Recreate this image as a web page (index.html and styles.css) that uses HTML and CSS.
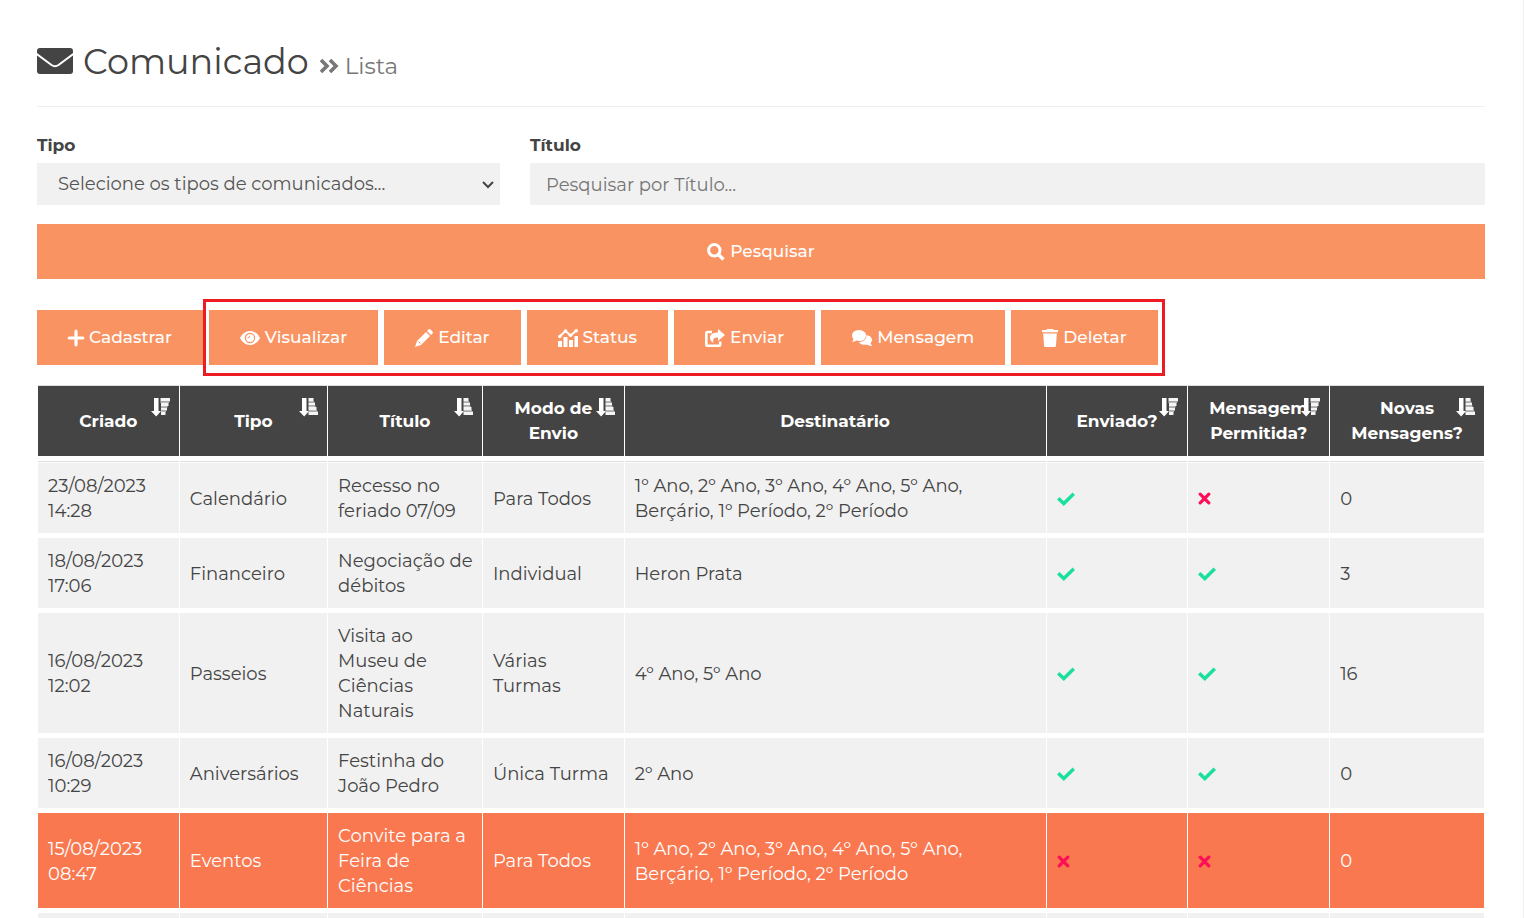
FILE: index.html
```html
<!DOCTYPE html>
<html lang="pt-BR">
<head>
<meta charset="utf-8">
<title>Comunicado - Lista</title>
<link rel="stylesheet" href="styles.css">
</head>
<body>
<svg class="sprite" aria-hidden="true">
  <symbol id="check" viewBox="0 0 18 14"><path d="M1.200 6.200L6.800 11.500L16.800 1.800" fill="none" stroke="currentColor" stroke-width="3.500"/></symbol>
  <symbol id="times" viewBox="0 0 14 14"><path d="M2.200 2.200L10.800 10.800M10.800 2.200L2.200 10.800" fill="none" stroke="currentColor" stroke-width="3.200" stroke-linecap="round"/></symbol>
  <symbol id="sort-asc" viewBox="0 0 20 20"><path d="M3 0h4.500v13H10L5.200 18.500L0 13h3z" fill="#fff"/><path d="M9.500 0h5v3h-5zM9.500 4.500h6.500v3h-6.500zM9.500 9h8v3h-8zM9.500 13.500h9.500v3.500h-9.500z" fill="#f4f4f4"/><path d="M9.500 3h5.500v1.500h-5.500zM9.500 7.500h7v1.500h-7zM9.500 12h8.500v1.500h-8.500z" fill="#bbb"/></symbol>
  <symbol id="sort-desc" viewBox="0 0 20 20"><path d="M3 0h4.500v13H10L5.200 18.500L0 13h3z" fill="#fff"/><path d="M9.500 0h9.500v3.500h-9.500zM10 5h7.500v3h-7.500zM10 9.500h6v3h-6zM10 14h4.500v3h-4.500z" fill="#f4f4f4"/><path d="M9.500 3.500h8.500v1.500h-8.500zM10 8h6.500v1.500h-6.500zM10 12.500h5v1.500h-5z" fill="#bbb"/></symbol>
</svg>
<main class="page">
  <h1 class="title">
    <svg class="title-icon" viewBox="0 0 36 26"><rect width="36" height="26" rx="3" fill="currentColor"/><path d="M-1 5.500L14.500 17Q18 19.400 21.500 17L37 5.500" fill="none" stroke="#fff" stroke-width="2"/></svg>
    <span>Comunicado</span>
    <small class="subtitle"><svg class="chevrons" viewBox="0 0 20 16"><path d="M2 2L8 8L2 14M11 2L17 8L11 14" fill="none" stroke="currentColor" stroke-width="3.600"/></svg>Lista</small>
  </h1>
  <form class="filters">
    <div class="field">
      <label for="tipo">Tipo</label>
      <div class="select-wrap">
        <select id="tipo" class="control select"><option>Selecione os tipos de comunicados...</option></select>
        <svg class="caret" viewBox="0 0 12 8"><path d="M1 1L6 6L11 1" fill="none" stroke="currentColor" stroke-width="2"/></svg>
      </div>
    </div>
    <div class="field">
      <label for="titulo">Título</label>
      <input id="titulo" class="control" type="text" placeholder="Pesquisar por Título...">
    </div>
    <button type="button" class="btn search"><svg class="icon i18" viewBox="0 0 18 18"><circle cx="7.300" cy="7.300" r="5.700" fill="none" stroke="currentColor" stroke-width="3"/><path d="M11.500 11.500L16.500 16.500" stroke="currentColor" stroke-width="3.400"/></svg>Pesquisar</button>
  </form>
  <div class="toolbar">
    <button type="button" class="btn"><svg class="icon i16" viewBox="0 0 16 16"><path d="M8 1.200V14.800M1.200 8H14.800" stroke="currentColor" stroke-width="3.200" stroke-linecap="round"/></svg>Cadastrar</button>
    <div class="highlight">
      <button type="button" class="btn"><svg class="icon i20" viewBox="0 0 20 16"><path d="M10 1C5.500 1 2 4 0 8c2 4 5.500 7 10 7s8-3 10-7c-2-4-5.500-7-10-7z" fill="currentColor"/><circle cx="10" cy="8" r="4.600" fill="none" stroke="#f99362" stroke-width="1.200"/><path d="M7.600 7.800Q9.800 7.800 9.900 5.600" fill="none" stroke="#f99362"/></svg>Visualizar</button>
      <button type="button" class="btn"><svg class="icon i18" viewBox="0 0 18 18"><path d="M11 3L15 7L6 16L0 18L2 12zM12 2L13.500.500q1-1 2 0l2 2q1 1 0 2L16 6z" fill="currentColor"/><path d="M3.500 12.500L5.500 14.500" stroke="#f99362"/></svg>Editar</button>
      <button type="button" class="btn"><svg class="icon i20" viewBox="0 0 20 18"><path d="M0 12h4v6H0zM5.500 8h4v10h-4zM11 11h4v7h-4zM16.500 7h3.500v11h-3.500z" fill="currentColor"/><path d="M1.500 7.500L7.500 2L12.500 6.500L18.500 1.500" fill="none" stroke="currentColor" stroke-width="2"/><g fill="currentColor"><circle cx="1.800" cy="7.500" r="1.800"/><circle cx="7.500" cy="2" r="1.800"/><circle cx="12.500" cy="6.300" r="1.800"/><circle cx="18.200" cy="1.800" r="1.800"/></g></svg>Status</button>
      <button type="button" class="btn"><svg class="icon i20" viewBox="0 0 20 18"><path d="M7 3H2.500Q1.300 3 1.300 4.200V15.500Q1.300 16.700 2.500 16.700H14Q15.200 16.700 15.200 15.500V12.500" fill="none" stroke="currentColor" stroke-width="2.600"/><path d="M13 0L20 6L13 12V8.500C9.500 8.500 7.500 9.500 8.500 14C2.500 10 4 3.500 13 3.500z" fill="currentColor"/></svg>Enviar</button>
      <button type="button" class="btn"><svg class="icon i20" viewBox="0 0 20 16"><path d="M14.500 5Q20 6 20 10Q20 12 18.500 13Q19 15 20.500 16Q17.500 16 15.500 14.700Q9 15.500 7 12Q14.500 11.500 14.500 5z" fill="currentColor"/><path d="M7 0Q14 .500 14 5.500Q13.500 11 7 11Q5.500 11 4.500 10.600Q2.500 12 0 12Q1.300 10.500 1.500 9Q0 7.500 0 5.500Q0 .500 7 0z" fill="currentColor"/></svg>Mensagem</button>
      <button type="button" class="btn"><svg class="icon i16" viewBox="0 0 16 18"><path d="M5 0h6l.800 1H16v2.300H0V1h4.200zM1.200 4.500h13.600L14 16.500Q13.900 18 12.500 18h-9Q2.100 18 2 16.500z" fill="currentColor"/></svg>Deletar</button>
    </div>
  </div>
  <table class="list">
    <colgroup><col class="w-s"><col class="w-m"><col class="w-l"><col class="w-s"><col class="w-xl"><col class="w-s"><col class="w-s"><col class="w-l"></colgroup>
    <thead>
      <tr>
        <th>Criado<svg class="sort"><use href="#sort-desc"/></svg></th>
        <th>Tipo<svg class="sort"><use href="#sort-asc"/></svg></th>
        <th>Título<svg class="sort"><use href="#sort-asc"/></svg></th>
        <th>Modo de<br>Envio<svg class="sort"><use href="#sort-asc"/></svg></th>
        <th>Destinatário</th>
        <th>Enviado?<svg class="sort"><use href="#sort-desc"/></svg></th>
        <th>Mensagem<br>Permitida?<svg class="sort"><use href="#sort-desc"/></svg></th>
        <th>Novas<br>Mensagens?<svg class="sort"><use href="#sort-asc"/></svg></th>
      </tr>
    </thead>
    <tbody>
      <tr><td>23/08/2023<br>14:28</td><td>Calendário</td><td>Recesso no<br>feriado 07/09</td><td>Para Todos</td><td>1º Ano, 2º Ano, 3º Ano, 4º Ano, 5º Ano,<br>Berçário, 1º Período, 2º Período</td><td><svg class="mark yes"><use href="#check"/></svg></td><td><svg class="mark no"><use href="#times"/></svg></td><td>0</td></tr>
      <tr><td>18/08/2023<br>17:06</td><td>Financeiro</td><td>Negociação de<br>débitos</td><td>Individual</td><td>Heron Prata</td><td><svg class="mark yes"><use href="#check"/></svg></td><td><svg class="mark yes"><use href="#check"/></svg></td><td>3</td></tr>
      <tr><td>16/08/2023<br>12:02</td><td>Passeios</td><td>Visita ao<br>Museu de<br>Ciências<br>Naturais</td><td>Várias<br>Turmas</td><td>4º Ano, 5º Ano</td><td><svg class="mark yes"><use href="#check"/></svg></td><td><svg class="mark yes"><use href="#check"/></svg></td><td>16</td></tr>
      <tr><td>16/08/2023<br>10:29</td><td>Aniversários</td><td>Festinha do<br>João Pedro</td><td>Única Turma</td><td>2º Ano</td><td><svg class="mark yes"><use href="#check"/></svg></td><td><svg class="mark yes"><use href="#check"/></svg></td><td>0</td></tr>
      <tr class="selected"><td>15/08/2023<br>08:47</td><td>Eventos</td><td>Convite para a<br>Feira de<br>Ciências</td><td>Para Todos</td><td>1º Ano, 2º Ano, 3º Ano, 4º Ano, 5º Ano,<br>Berçário, 1º Período, 2º Período</td><td><svg class="mark no"><use href="#times"/></svg></td><td><svg class="mark no"><use href="#times"/></svg></td><td>0</td></tr>
      <tr><td></td><td></td><td></td><td></td><td></td><td></td><td></td><td></td></tr>
    </tbody>
  </table>
</main>
</body>
</html>
```
FILE: styles.css
```css
* { box-sizing: border-box; }
body {
  margin: 0;
  height: 100vh;
  overflow: hidden;
  background: #fff;
  color: #444;
  font: 400 18px/25px Montserrat, Inter, sans-serif;
}
.sprite { display: none; }
.page {
  min-height: 100vh;
  padding: 38px 38px 0 37px;
  border-right: 1px solid #eee;
}
.title {
  display: flex;
  align-items: baseline;
  gap: 10px;
  margin: 0 0 26px;
  padding-bottom: 16px;
  border-bottom: 1px solid #eee;
  font-size: 35px;
  line-height: 48px;
  font-weight: 400;
}
.title-icon { width: 36px; height: 26px; }
.subtitle {
  display: flex;
  align-items: baseline;
  gap: 6px;
  color: #777;
  font-size: 23px;
}
.chevrons { width: 20px; height: 16px; }
.filters {
  display: grid;
  grid-template-columns: 463fr 955fr;
  gap: 19px 30px;
}
.field label { display: block; margin-bottom: 5px; font-size: 17px; font-weight: 700; }
.control {
  display: block;
  width: 100%;
  height: 42px;
  padding: 1px 16px 0;
  border: 0;
  border-radius: 0;
  background: #f1f1f1;
  color: #555;
  font: inherit;
}
.control::placeholder { color: #757575; opacity: 1; }
.select-wrap { position: relative; }
.select { appearance: none; padding: 1px 21px 0; }
.caret {
  position: absolute;
  top: 18px;
  right: 6px;
  width: 12px;
  height: 8px;
  pointer-events: none;
}
.btn {
  display: flex;
  align-items: center;
  justify-content: center;
  gap: 5px;
  height: 55px;
  padding: 0 31px;
  border: 0;
  background: #f99362;
  color: #fff;
  font: inherit;
  font-size: 17px;
  font-weight: 500;
  white-space: nowrap;
}
.search { grid-column: 1 / -1; }
.icon { height: 18px; flex: none; overflow: visible; }
.i16 { width: 16px; }
.i18 { width: 18px; }
.i20 { width: 20px; }
.toolbar { display: flex; align-items: center; margin: 20px 0 9px; }
.highlight {
  display: flex;
  gap: 6px;
  padding: 8px 4px 8px 3px;
  border: 3px solid #ed1c24;
}
.list {
  width: 100%;
  table-layout: fixed;
  border-collapse: separate;
  border-spacing: 0;
  border-right: 1px solid #fff;
}
.w-s { width: 9.8%; }
.w-m { width: 10.25%; }
.w-l { width: 10.7%; }
.w-xl { width: 29.15%; }
.list th {
  position: relative;
  height: 76px;
  padding: 10px;
  border: solid #fff;
  border-width: 1px 0 5px 1px;
  border-top-color: #ddd;
  background: #444;
  background-clip: padding-box;
  color: #fff;
  font-size: 17px;
  font-weight: 700;
  white-space: nowrap;
}
.sort { position: absolute; top: 12px; right: 8px; width: 20px; height: 20px; }
.list td {
  height: 75px;
  padding: 11px 10px 9px;
  border: solid #fff;
  border-width: 0 0 5px 1px;
  background: #f1f1f1;
  background-clip: padding-box;
  vertical-align: middle;
  white-space: nowrap;
}
.list tbody tr:first-child td {
  height: 77px;
  padding-top: 13px;
  background: linear-gradient(#ddd 0 1px, #fff 1px 2px, #f1f1f1 2px) padding-box;
}
.list .selected td { background-color: #f97850; color: #fff; }
.mark { display: block; height: 14px; }
.yes { width: 18px; color: #1be09c; }
.no { width: 14px; color: #ff0d57; }
```
